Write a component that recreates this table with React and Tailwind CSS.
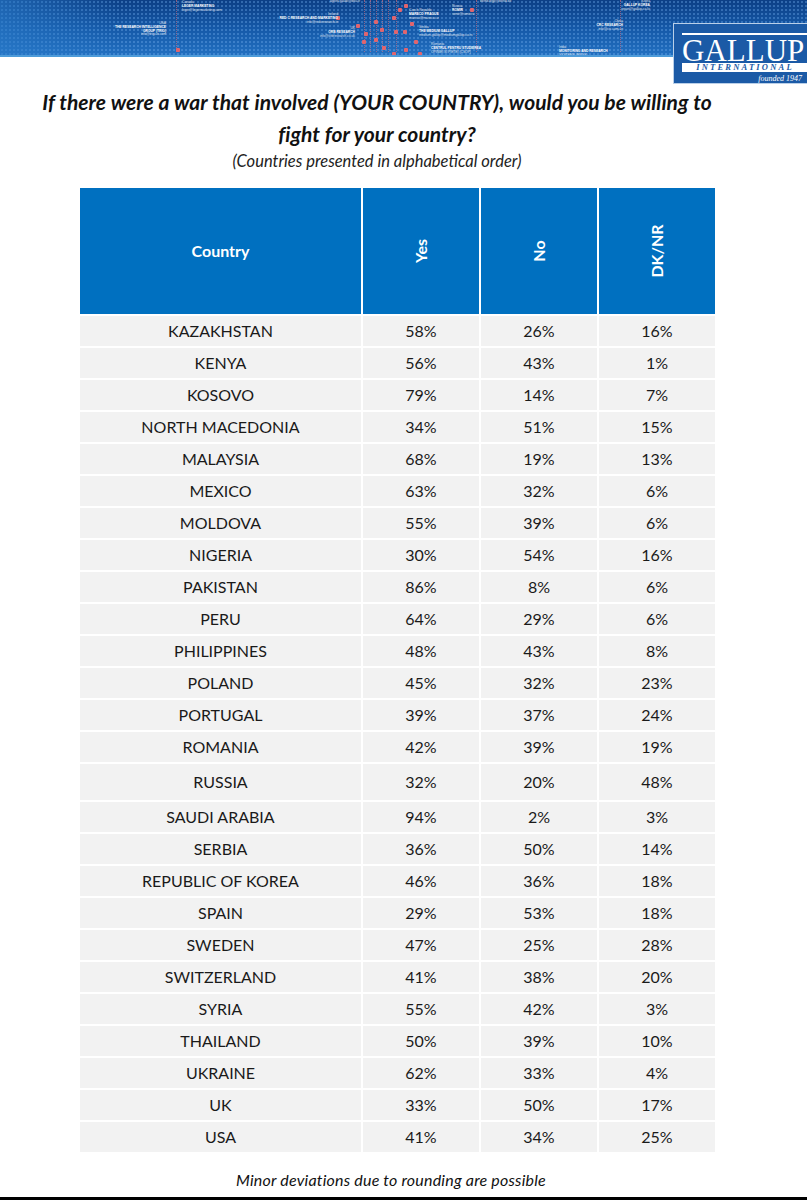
import React from "react";

const rows = [
  ["KAZAKHSTAN", "58%", "26%", "16%"],
  ["KENYA", "56%", "43%", "1%"],
  ["KOSOVO", "79%", "14%", "7%"],
  ["NORTH MACEDONIA", "34%", "51%", "15%"],
  ["MALAYSIA", "68%", "19%", "13%"],
  ["MEXICO", "63%", "32%", "6%"],
  ["MOLDOVA", "55%", "39%", "6%"],
  ["NIGERIA", "30%", "54%", "16%"],
  ["PAKISTAN", "86%", "8%", "6%"],
  ["PERU", "64%", "29%", "6%"],
  ["PHILIPPINES", "48%", "43%", "8%"],
  ["POLAND", "45%", "32%", "23%"],
  ["PORTUGAL", "39%", "37%", "24%"],
  ["ROMANIA", "42%", "39%", "19%"],
  ["RUSSIA", "32%", "20%", "48%"],
  ["SAUDI ARABIA", "94%", "2%", "3%"],
  ["SERBIA", "36%", "50%", "14%"],
  ["REPUBLIC OF KOREA", "46%", "36%", "18%"],
  ["SPAIN", "29%", "53%", "18%"],
  ["SWEDEN", "47%", "25%", "28%"],
  ["SWITZERLAND", "41%", "38%", "20%"],
  ["SYRIA", "55%", "42%", "3%"],
  ["THAILAND", "50%", "39%", "10%"],
  ["UKRAINE", "62%", "33%", "4%"],
  ["UK", "33%", "50%", "17%"],
  ["USA", "41%", "34%", "25%"],
];

const labels = [
  { x: 182, y: 1, lines: ["Canada", "LEGER MARKETING", "leger@legermarketing.com"], align: "left" },
  { x: 100, y: 22, lines: ["USA", "THE RESEARCH INTELLIGENCE", "GROUP (TRIG)", "info@trig-us.com"], align: "right", w: 66 },
  { x: 270, y: 13, lines: ["Ireland", "RED C RESEARCH AND MARKETING", "info@redcresearch.ie"], align: "right", w: 68 },
  { x: 300, y: 27, lines: ["UK", "ORB RESEARCH", "info@orbresearch.co.uk"], align: "right", w: 55 },
  { x: 320, y: 0, lines: ["agnes.gaudi@ibsu.fr"], align: "right", w: 40 },
  { x: 409, y: 9, lines: ["Czech Republic", "MARECO PRAGUE", "mareco@mareco.cz"], align: "left" },
  { x: 452, y: 5, lines: ["Russia", "ROMIR", "romir@romir.ru"], align: "left" },
  { x: 419, y: 26, lines: ["Serbia", "THE MEDIUM GALLUP", "medium.gallup@mediumgallup.co.rs"], align: "left" },
  { x: 431, y: 43, lines: ["Romania", "CENTRUL PENTRU STUDIEREA", "OPINIEI SI PIETEI (CSOP)"], align: "left" },
  { x: 575, y: 20, lines: ["China", "CRC RESEARCH", "info@crc.com.cn"], align: "right", w: 48 },
  { x: 559, y: 46, lines: ["India", "MONITORING AND RESEARCH", "SYSTEMS (MRSS)"], align: "left" },
  { x: 610, y: 0, lines: ["Korea", "GALLUP KOREA", "report@gallup.co.kr"], align: "right", w: 40 },
  { x: 480, y: 0, lines: ["bernd.bgp@bernd.de"], align: "left" },
];

const redDots = [
  [176, 48], [336, 16], [356, 24], [374, 20], [392, 16], [364, 32], [380, 28], [394, 30],
  [374, 38], [362, 40], [392, 52], [398, 8], [404, 4], [410, 22], [414, 40], [404, 48],
  [418, 52], [470, 8], [403, 30], [382, 46],
];

const redLines = [176, 364, 370, 376, 382, 388, 396, 476, 620];

function Banner() {
  return (
    <div className="relative h-[57px] w-full overflow-hidden bg-gradient-to-b from-[#0c3f86] via-[#1559a8] to-[#2371c2]">
      <div className="absolute inset-0 bg-[radial-gradient(circle,rgba(110,170,235,0.55)_0.9px,transparent_1.3px)] bg-[length:4px_4px] opacity-70" />
      <div className="absolute left-0 top-0 h-full w-[120px] bg-gradient-to-r from-[#2a7ccb] to-transparent opacity-60" />
      {redLines.map((x, i) => (
        <div
          key={"l" + i}
          className="absolute top-0 h-[52px] w-px border-l border-dotted border-[#e0707a] opacity-60"
          style={{ left: x }}
        />
      ))}
      {redDots.map(([x, y], i) => (
        <div
          key={"d" + i}
          className="absolute h-[4px] w-[4px] rounded-[1px] bg-[#e0656e]"
          style={{ left: x, top: y }}
        />
      ))}
      {labels.map((l, i) => (
        <div
          key={"t" + i}
          className={
            "absolute font-['Liberation_Sans',sans-serif] text-[3.3px] font-bold leading-[3.8px] text-white " +
            (l.align === "right" ? "text-right" : "text-left")
          }
          style={{ left: l.x, top: l.y, width: l.w }}
        >
          {l.lines.map((t, j) => (
            <div key={j} className={j === 0 || j === l.lines.length - 1 ? "font-normal opacity-80" : ""}>
              {t}
            </div>
          ))}
        </div>
      ))}
      <div className="absolute bottom-0 left-0 h-[2px] w-full bg-[#4d9bd9]" />
    </div>
  );
}

function Logo() {
  return (
    <div className="absolute left-[673px] top-[23px] h-[61px] w-[136px] border border-[#b9cfe8] bg-[#1b5aa6]">
      <div className="ml-[8px] mt-[9px] h-[2px] bg-white" />
      <div className="ml-[8px] mt-[1px] flex h-[26px] items-end font-['Liberation_Serif',serif] text-[31px] leading-[23px] text-white">
        GALLUP
      </div>
      <div className="ml-[8px] mt-[1px] flex h-[9px] items-center justify-center bg-white font-['Liberation_Serif',serif] text-[8.5px] font-bold italic leading-[9px] tracking-[2.2px] text-[#1b5aa6]">
        INTERNATIONAL
      </div>
      <div className="mr-[6px] mt-[2px] text-right font-['Liberation_Serif',serif] text-[8px] italic leading-[9px] text-white">
        founded 1947
      </div>
    </div>
  );
}

export default function App() {
  return (
    <div className="relative h-[1200px] w-[807px] overflow-hidden bg-white font-['Lato',sans-serif] text-[#1a1a1a]">
      <Banner />
      <Logo />
      <div className="pr-[53px] pt-[29px] text-center">
        <h1 className="text-[21px] font-bold italic leading-[32px] tracking-[0.05px] text-[#111]">
          If there were a war that involved (YOUR COUNTRY), would you be willing to
          <br />
          fight for your country?
        </h1>
        <p className="text-[16.5px] italic leading-[22px] text-[#222]">
          (Countries presented in alphabetical order)
        </p>
      </div>
      <div className="ml-[80px] mt-[16px] grid w-[635px] grid-cols-[281px_116px_116px_116px] gap-[2px]">
        <div className="flex h-[126px] items-center justify-center bg-[#0070c0] text-[16px] font-bold text-white">
          Country
        </div>
        {["Yes", "No", "DK/NR"].map((h) => (
          <div key={h} className="flex h-[126px] items-center justify-center bg-[#0070c0]">
            <span className="-rotate-90 whitespace-nowrap text-[16px] font-bold text-white">{h}</span>
          </div>
        ))}
        {rows.map((r) =>
          r.map((c, j) => (
            <div
              key={r[0] + j}
              className={
                "flex items-center justify-center bg-[#f2f2f2] text-[16px] " +
                (r[0] === "RUSSIA" ? "h-[36px]" : "h-[30px]")
              }
            >
              {c}
            </div>
          ))
        )}
      </div>
      <p className="mt-[18px] pr-[25px] text-center text-[16px] italic leading-[20px] tracking-[0.2px] text-[#111]">
        Minor deviations due to rounding are possible
      </p>
      <div className="absolute bottom-0 left-0 h-[3px] w-full bg-black" />
    </div>
  );
}
